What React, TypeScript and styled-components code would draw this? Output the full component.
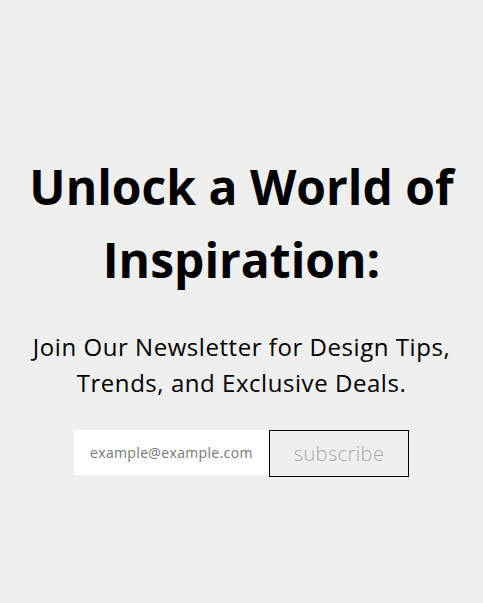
import React from "react";
import styled, { createGlobalStyle } from "styled-components";

const Global = createGlobalStyle`
  html, body { margin: 0; padding: 0; background: #efefef; }
  body { font-family: "Open Sans", "Liberation Sans", sans-serif; }
`;

const Page = styled.main`
  min-height: 603px;
  box-sizing: border-box;
  display: flex;
  flex-direction: column;
  align-items: center;
  padding-top: 150px;
`;

const Title = styled.h1`
  margin: 0;
  font-size: 48px;
  line-height: 73px;
  font-weight: 700;
  color: #000;
  text-align: center;
  width: 440px;
`;

const Subtitle = styled.p`
  margin: 33px 0 0;
  font-size: 24px;
  line-height: 36px;
  letter-spacing: 0.55px;
  font-weight: 400;
  color: #000;
  text-align: center;
  width: 460px;
`;

const Form = styled.form`
  display: flex;
  margin-top: 29px;
`;

const EmailInput = styled.input`
  width: 195px;
  height: 45px;
  box-sizing: border-box;
  border: none;
  background: #fff;
  padding: 0 16px;
  font-family: inherit;
  font-size: 14px;
  letter-spacing: 0.35px;
  color: #333;
  outline: none;
  &::placeholder { color: #777; }
`;

const SubmitButton = styled.button`
  width: 140px;
  height: 47px;
  box-sizing: border-box;
  border: 1px solid #000;
  background: transparent;
  font-family: inherit;
  font-size: 20px;
  letter-spacing: 0.4px;
  font-weight: 300;
  color: #aaa;
  cursor: pointer;
`;

export default function App() {
  return (
    <>
      <Global />
      <Page>
        <Title>Unlock a World of Inspiration:</Title>
        <Subtitle>Join Our Newsletter for Design Tips, Trends, and Exclusive Deals.</Subtitle>
        <Form onSubmit={(e) => e.preventDefault()}>
          <EmailInput type="email" placeholder="example@example.com" />
          <SubmitButton type="submit">subscribe</SubmitButton>
        </Form>
      </Page>
    </>
  );
}
